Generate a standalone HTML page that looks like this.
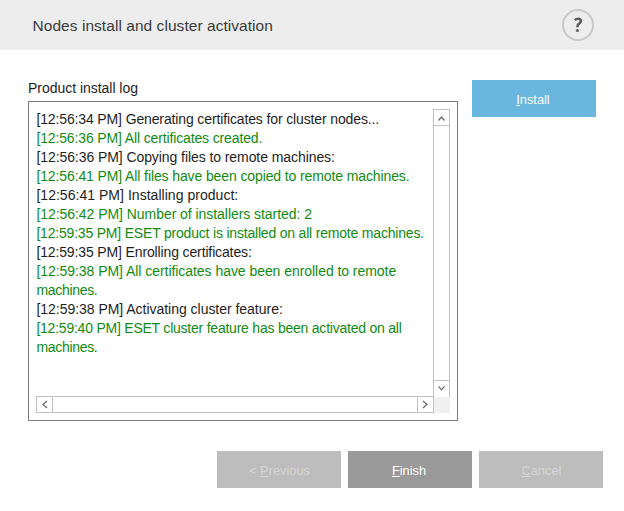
<!DOCTYPE html>
<html><head><meta charset="utf-8">
<style>
html,body{margin:0;padding:0;}
body{width:624px;height:511px;position:relative;overflow:hidden;background:#ffffff;font-family:"Liberation Sans",sans-serif;}
.abs{position:absolute;white-space:nowrap;}
#hdr{left:0;top:0;width:624px;height:50px;background:#ededed;}
#title{left:32.5px;top:16px;font-size:15.5px;letter-spacing:0.05px;color:#3a3a3a;line-height:20px;}
#help{left:562px;top:9px;width:28px;height:28px;border:2px solid #c9c9c9;border-radius:50%;}
#helpq{left:562px;top:9px;width:32px;height:32px;text-align:center;line-height:32px;font-size:18px;font-weight:bold;color:#5f5f5f;}
#lbl{left:28px;top:79px;font-size:14px;letter-spacing:-0.03px;color:#1e1e1e;line-height:18px;}
#box{left:28px;top:101px;width:428px;height:318px;border:1px solid #7a7a7a;background:#fff;}
.ln{position:absolute;left:36.4px;font-size:14px;letter-spacing:-0.17px;line-height:19px;white-space:nowrap;color:#1e1e1e;}
.g{color:#128a12;}
#vs{left:433px;top:109px;width:15px;height:287px;border:1px solid #c2c2c2;border-bottom:none;background:#fff;}
#hs{left:36px;top:396px;width:396px;height:15px;border:1px solid #c2c2c2;background:#fff;}
#corner{left:434px;top:397px;width:16px;height:16px;background:#f0f0f0;}
.btn{position:absolute;width:124px;height:37px;text-align:center;line-height:37px;font-size:12.8px;}
.btn span.t{position:relative;top:1px;left:-1px;}
.u{text-decoration:underline;}
</style></head><body>
<div id="hdr" class="abs"></div>
<div id="title" class="abs">Nodes install and cluster activation</div>
<div id="help" class="abs"></div>
<div id="lbl" class="abs">Product install log</div>
<div id="box" class="abs"></div>
<div class="ln" style="top:110px;letter-spacing:-0.130px">[12:56:34 PM] Generating certificates for cluster nodes...</div>
<div class="ln g" style="top:129px;letter-spacing:-0.136px">[12:56:36 PM] All certificates created.</div>
<div class="ln" style="top:148px;letter-spacing:-0.074px">[12:56:36 PM] Copying files to remote machines:</div>
<div class="ln g" style="top:167px;letter-spacing:-0.111px">[12:56:41 PM] All files have been copied to remote machines.</div>
<div class="ln" style="top:186px;letter-spacing:0.033px">[12:56:41 PM] Installing product:</div>
<div class="ln g" style="top:205px;letter-spacing:-0.050px">[12:56:42 PM] Number of installers started: 2</div>
<div class="ln g" style="top:224px;letter-spacing:-0.194px">[12:59:35 PM] ESET product is installed on all remote machines.</div>
<div class="ln" style="top:243px;letter-spacing:-0.134px">[12:59:35 PM] Enrolling certificates:</div>
<div class="ln g" style="top:262px;letter-spacing:-0.049px">[12:59:38 PM] All certificates have been enrolled to remote</div>
<div class="ln g" style="top:281px;letter-spacing:-0.307px">machines.</div>
<div class="ln" style="top:300px;letter-spacing:-0.027px">[12:59:38 PM] Activating cluster feature:</div>
<div class="ln g" style="top:319px;letter-spacing:-0.226px">[12:59:40 PM] ESET cluster feature has been activated on all</div>
<div class="ln g" style="top:338px;letter-spacing:-0.307px">machines.</div>
<div id="vs" class="abs"></div>
<div class="abs" style="left:433px;top:125px;width:17px;height:1px;background:#c2c2c2"></div>
<div class="abs" style="left:433px;top:380px;width:17px;height:1px;background:#c2c2c2"></div>
<div id="hs" class="abs"></div>
<div class="abs" style="left:52px;top:396px;width:1px;height:17px;background:#c2c2c2"></div>
<div class="abs" style="left:417px;top:396px;width:1px;height:17px;background:#c2c2c2"></div>
<div id="corner" class="abs"></div>
<svg class="abs" style="left:0;top:0" width="624" height="511">
 <path d="M574.8,20.1 C575.6,19.1 576.8,18.7 578.3,18.7 C580.2,18.7 580.9,19.9 580.9,21 C580.9,22.5 579.6,23.3 578.6,24.1 C577.7,24.8 577.4,25.6 577.4,27.3" fill="none" stroke="#5c5c5c" stroke-width="2.6"/>
 <circle cx="577.4" cy="30.5" r="1.55" fill="#5c5c5c"/>
 <polyline points="438.5,120.5 441.5,117 444.5,120.5" fill="none" stroke="#6a6a6a" stroke-width="1.25"/>
 <polyline points="438.5,386.3 441.5,389.8 444.5,386.3" fill="none" stroke="#6a6a6a" stroke-width="1.25"/>
 <polyline points="47,401 43,404.5 47,408" fill="none" stroke="#6a6a6a" stroke-width="1.25"/>
 <polyline points="423,401 427,404.5 423,408" fill="none" stroke="#6a6a6a" stroke-width="1.25"/>
</svg>
<div class="btn" style="left:472px;top:80px;background:#69b6de;color:#ffffff"><span class="t"><span class="u">I</span>nstall</span></div>
<div class="btn" style="left:217px;top:451px;background:#bdbdbd;color:#d6d6d6"><span class="t" style="left:0.5px">&lt; <span class="u">P</span>revious</span></div>
<div class="btn" style="left:348px;top:451px;background:#9a9a9a;color:#ffffff"><span class="t"><span class="u">F</span>inish</span></div>
<div class="btn" style="left:479px;top:451px;background:#bdbdbd;color:#d6d6d6"><span class="t" style="left:0.5px"><span class="u">C</span>ancel</span></div>
</body></html>
